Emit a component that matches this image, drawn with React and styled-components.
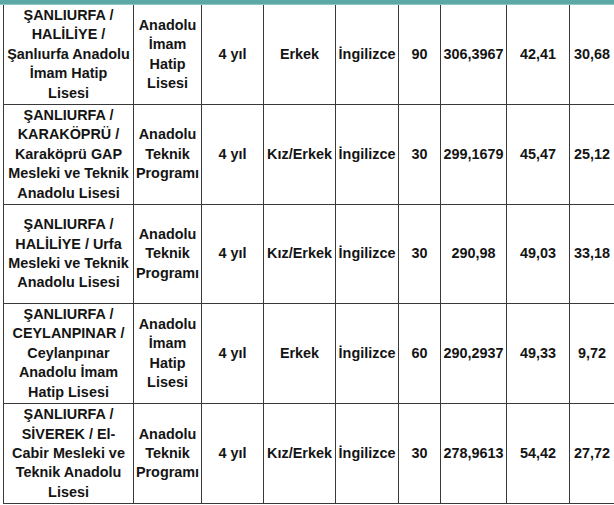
import React from "react";
import styled, { createGlobalStyle } from "styled-components";

const Global = createGlobalStyle`
  html, body { margin: 0; padding: 0; background: #fff; }
  body { font-family: "Liberation Sans", Arial, Helvetica, sans-serif; }
`;

const Page = styled.div`
  width: 614px;
  background: #fff;
`;

const TopBar = styled.div`
  height: 4px;
  background: #5ba8a6;
  border-bottom: 1px solid #8cc6c4;
`;

const TableWrap = styled.div`
  padding-left: 3px;
`;

const Table = styled.table`
  width: 611px;
  table-layout: fixed;
  border-collapse: collapse;
  border-style: hidden solid solid solid;
  border-width: 1px;
  border-color: #3a3a3a;
`;

const Row = styled.tr`
  height: 99px;
`;

const Cell = styled.td`
  border: 1px solid #3a3a3a;
  padding: 1px 1px;
  text-align: center;
  vertical-align: middle;
  font-size: 14.4px;
  line-height: 19.4px;
  font-weight: 700;
  color: #141414;
  white-space: nowrap;
`;

const Line = styled.span`
  display: block;
`;

const widths = [130, 68, 62, 72, 63, 42, 66, 63, 45];

const rows = [
  {
    school: ["ŞANLIURFA /", "HALİLİYE /", "Şanlıurfa Anadolu", "İmam Hatip", "Lisesi"],
    type: ["Anadolu", "İmam", "Hatip", "Lisesi"],
    gender: "Erkek",
    quota: "90",
    score: "306,3967",
    p1: "42,41",
    p2: "30,68",
  },
  {
    school: ["ŞANLIURFA /", "KARAKÖPRÜ /", "Karaköprü GAP", "Mesleki ve Teknik", "Anadolu Lisesi"],
    type: ["Anadolu", "Teknik", "Programı"],
    gender: "Kız/Erkek",
    quota: "30",
    score: "299,1679",
    p1: "45,47",
    p2: "25,12",
  },
  {
    school: ["ŞANLIURFA /", "HALİLİYE / Urfa", "Mesleki ve Teknik", "Anadolu Lisesi"],
    type: ["Anadolu", "Teknik", "Programı"],
    gender: "Kız/Erkek",
    quota: "30",
    score: "290,98",
    p1: "49,03",
    p2: "33,18",
  },
  {
    school: ["ŞANLIURFA /", "CEYLANPINAR /", "Ceylanpınar", "Anadolu İmam", "Hatip Lisesi"],
    type: ["Anadolu", "İmam", "Hatip", "Lisesi"],
    gender: "Erkek",
    quota: "60",
    score: "290,2937",
    p1: "49,33",
    p2: "9,72",
  },
  {
    school: ["ŞANLIURFA /", "SİVEREK / El-", "Cabir Mesleki ve", "Teknik Anadolu", "Lisesi"],
    type: ["Anadolu", "Teknik", "Programı"],
    gender: "Kız/Erkek",
    quota: "30",
    score: "278,9613",
    p1: "54,42",
    p2: "27,72",
  },
];

export default function App() {
  return (
    <Page>
      <Global />
      <TopBar />
      <TableWrap>
        <Table>
          <colgroup>
            {widths.map((w, i) => (
              <col key={i} style={{ width: w }} />
            ))}
          </colgroup>
          <tbody>
            {rows.map((r, i) => (
              <Row key={i}>
                <Cell>
                  {r.school.map((l, j) => (
                    <Line key={j}>{l}</Line>
                  ))}
                </Cell>
                <Cell>
                  {r.type.map((l, j) => (
                    <Line key={j}>{l}</Line>
                  ))}
                </Cell>
                <Cell>4 yıl</Cell>
                <Cell>{r.gender}</Cell>
                <Cell>İngilizce</Cell>
                <Cell>{r.quota}</Cell>
                <Cell>{r.score}</Cell>
                <Cell>{r.p1}</Cell>
                <Cell>{r.p2}</Cell>
              </Row>
            ))}
          </tbody>
        </Table>
      </TableWrap>
    </Page>
  );
}
